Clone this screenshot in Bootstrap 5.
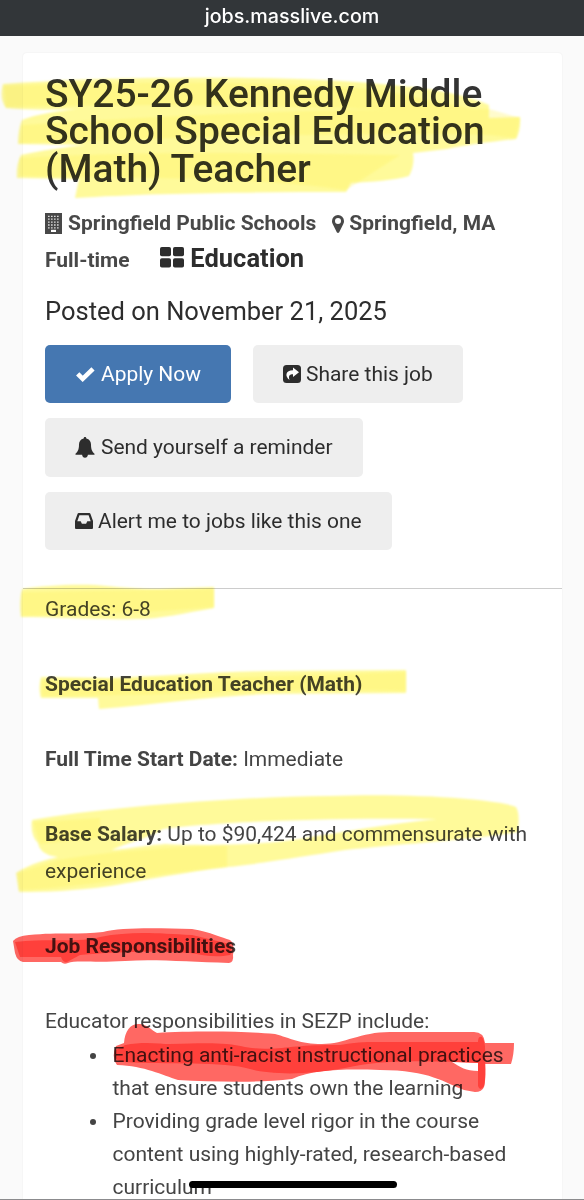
<!DOCTYPE html>
<html lang="en">
<head>
<meta charset="utf-8">
<meta name="viewport" content="width=device-width, initial-scale=1">
<title>SY25-26 Kennedy Middle School Special Education (Math) Teacher</title>
<link href="https://cdn.jsdelivr.net/npm/bootstrap@5.3.0/dist/css/bootstrap.min.css" rel="stylesheet">
<style>
body{font-family:Roboto,"Liberation Sans",sans-serif;font-size:20.98px;line-height:37.5px;color:#444;background:#fafafa}
.screen{height:1200px;border-bottom:1px solid #8b8b8d}
.urlbar{height:36px;background:#323639;color:#fff;font:500 19.7px/32px Inter,"Liberation Sans",sans-serif}
.job{margin:17px 22px 0 23px;background:#fff;border-radius:4px;box-shadow:0 0 2px rgba(0,0,0,.07)}
.job-head{padding:22.5px 22px 0;height:536px;border-bottom:1px solid #ccc}
.job-title{font-size:38.95px;line-height:37.5px;font-weight:500;color:#333;height:129.5px}
.meta{color:#484848;height:37px;white-space:nowrap}
.meta.second{margin-top:-2.5px}
.category{font-size:25.5px;color:#2d2d2d;margin-left:30.5px}
.category svg{position:relative;top:1px}
.posted{font-size:25.5px;color:#2d2d2d;margin-top:16.5px;margin-bottom:14px;height:37.5px}
.actions{gap:15px 22px}
.btn-job{height:58.5px;padding:0 30px;border:0;border-radius:5px;font-size:20.95px;line-height:58px;background:#eee;color:#2d2d2d;white-space:nowrap}
.btn-job.apply{background:#4577b1;color:#fff}
.job-body{padding:1.500px 22px 0}
.job-body p{margin-bottom:37.5px;white-space:nowrap}
.job-body ul{list-style:none;padding-left:67.5px;margin-top:-39.5px;line-height:33px}
.job-body li{position:relative;white-space:nowrap}
.job-body li::before{content:"";position:absolute;left:-23px;top:14px;width:6px;height:6px;border-radius:50%;background:#444}
.ink{left:0;top:0;mix-blend-mode:multiply;pointer-events:none}
.homebar{left:189px;top:1180.5px;width:207.5px;height:7px;background:#000}
svg{flex:none}
</style>
</head>
<body>
<div class="screen position-relative overflow-hidden">
  <header class="urlbar text-center">jobs.masslive.com</header>
  <main class="job">
    <section class="job-head">
      <h1 class="job-title mb-0">SY25-26 Kennedy Middle<br>School Special Education<br>(Math) Teacher</h1>
      <div class="meta d-flex align-items-center fw-bold">
        <svg width="17" height="21" viewBox="0 0 17 21"><path fill="#484848" d="M0 0h17v21H0z"/><path d="M3.2 3.3h11M3.2 6.2h11M3.2 9.1h11M3.2 12h11M3.2 14.9h11" stroke="#fff" stroke-width="1.3" stroke-dasharray="1.3 1.7"/><path fill="#fff" d="M6 16.8h5V19H6z"/></svg>
        <span style="margin-left:6px">Springfield Public Schools</span>
        <svg width="12" height="18" viewBox="0 0 12 18" style="margin-left:15.500px"><path fill="#484848" fill-rule="evenodd" d="M6 0a6 6 0 0 1 6 6c0 1.3-.3 2.1-.7 3L7.200 17.200q-1.200 1.500-2.400 0L.700 9C.3 8.100 0 7.300 0 6a6 6 0 0 1 6-6zm0 3a3 3 0 1 0 0 6 3 3 0 0 0 0-6z"/></svg>
        <span style="margin-left:5.500px">Springfield, MA</span>
      </div>
      <div class="meta second d-flex align-items-baseline fw-bold">
        <span>Full-time</span>
        <span class="category"><svg width="24" height="21" viewBox="0 0 24 21" class="align-baseline"><g fill="#2d2d2d"><rect width="11" height="9.300" rx="1.800"/><rect x="13" width="11" height="9.300" rx="1.800"/><rect y="11.300" width="11" height="9.300" rx="1.800"/><rect x="13" y="11.300" width="11" height="9.300" rx="1.800"/></g></svg> Education</span>
      </div>
      <div class="posted">Posted on November 21, 2025</div>
      <div class="actions d-flex flex-wrap">
        <a class="btn btn-job apply d-flex align-items-center" href="#"><svg width="20" height="16" viewBox="0 0 20 16"><path d="M2.700 7.800l5 5L18 2.800" fill="none" stroke="#fff" stroke-width="4.600"/></svg><span style="margin-left:6px">Apply Now</span></a>
        <a class="btn btn-job d-flex align-items-center" href="#"><svg width="18" height="18" viewBox="0 0 18 18"><rect width="18" height="18" rx="3.500" fill="#2d2d2d"/><path fill="#fff" d="M10 2.500l6 4.700-6 4.800V9.200c-3.500 0-4.700 1.500-3.500 5.800C1.500 11 2.500 5.300 10 5.200z"/></svg><span style="margin-left:5px">Share this job</span></a>
        <a class="btn btn-job d-flex align-items-center" href="#"><svg width="20" height="21" viewBox="0 0 20 21"><path fill="#2d2d2d" d="M10 0c.9 0 1.400.600 1.300 1.500C14.500 2.200 16 4.500 16 7.500c0 5 1.300 7.500 3.500 9.200v1.100h-6.600c-.2 1.800-1.300 2.900-2.900 2.900s-2.700-1.100-2.900-2.900H.5v-1.100C2.700 15 4 12.500 4 7.500c0-3 1.500-5.300 4.700-6C8.600.600 9.100 0 10 0z"/></svg><span style="margin-left:6px">Send yourself a reminder</span></a>
        <a class="btn btn-job d-flex align-items-center" href="#"><svg width="18" height="16" viewBox="0 0 18 16"><path fill="#2d2d2d" fill-rule="evenodd" d="M3.700 0h10.600q.8 0 1.100.8L18 8v7q0 1-1 1H1q-1 0-1-1V8L2.600.8Q2.900 0 3.700 0zm.7 2.300L2.300 8.200h3.400l1.200 2.500h4.200l1.200-2.500h3.400l-2.100-5.900z"/></svg><span style="margin-left:5px">Alert me to jobs like this one</span></a>
      </div>
    </section>
    <section class="job-body">
      <p>Grades: 6-8</p>
      <p><strong>Special Education Teacher (Math)</strong></p>
      <p><strong>Full Time Start Date:</strong> Immediate</p>
      <p><strong>Base Salary:</strong> Up to $90,424 and commensurate with<br>experience</p>
      <p><strong>Job Responsibilities</strong></p>
      <p>Educator responsibilities in SEZP include:</p>
      <ul class="mb-0">
        <li>Enacting anti-racist instructional practices<br>that ensure students own the learning</li>
        <li>Providing grade level rigor in the course<br>content using highly-rated, research-based<br>curriculum</li>
      </ul>
    </section>
  </main>

  <!-- marker strokes over the page -->
  <svg class="ink position-absolute" width="584" height="1200" viewBox="0 0 584 1200">
    <defs><filter id="soft" x="-5%" y="-20%" width="110%" height="140%"><feGaussianBlur stdDeviation=".9"/></filter><filter id="edge" x="-5%" y="-20%" width="110%" height="140%"><feGaussianBlur stdDeviation=".6"/></filter></defs>
    <g fill="#fffa9a" filter="url(#soft)">
      <path d="M3 84C60 80 110 78 170 78C260 77 330 79 380 84C430 88 460 93 489 105L489 118L520 117Q521 130 516 139C490 142 465 145 447 149L413 153Q415 165 409 176C395 180 370 182 351 183L346 192C260 192 150 193 75 198L79 179L17 178Q16 165 21 155C40 151 65 147 86 145L18 144Q18 130 22 120C36 114 60 111 76 109C50 110 25 110 6 108Q-1 98 3 84z"/>
      <path d="M22 589C40 586 70 584 95 585C120 587 135 589 160 589L214 587L214 608C185 613 160 619 138 619C90 620 60 617 21 617Q19 602 22 589z"/>
      <path d="M41 677L110 678C160 676 210 672 270 671L406 670L406 693L270 694C210 696 160 704 99 709L98 698L41 698Q38 688 41 677z"/>
      <path fill-rule="evenodd" d="M32 820C100 808 230 797 330 796C420 793 500 800 516 807Q520 814 518 829L518 832C470 840 390 845 345 850C280 860 250 865 227 867C200 870 150 879 110 886C75 891 45 892 19 892L16 873C30 864 45 860 58 857Q40 855 38 843Q30 835 32 820zM163 829C200 824 300 817 437 819C390 824 340 832 300 839C260 845 210 846 165 844C140 846 120 850 112 850C125 843 150 838 163 829z"/>
    </g>
    <g fill="#fff25a" opacity=".3" filter="url(#soft)">
      <path d="M4 86C150 80 300 82 380 90L489 112L489 116C400 108 200 102 6 107z"/>
      <path d="M22 125C150 117 320 107 489 109L520 118L516 138L489 135C300 132 130 140 20 143z"/>
      <path d="M20 158C150 150 300 154 400 155L346 190C240 175 120 179 20 176z"/>
      <path d="M22 592L214 589L214 607C150 613 80 615 22 616z"/>
      <path d="M42 680C160 680 280 676 406 672L406 691C280 688 160 696 42 696z"/>
      <path d="M33 822L100 818V838L40 844z"/>
      <path d="M58 860C120 850 170 847 227 846L227 867C160 873 80 888 19 890L18 873z"/>
    </g>
    <g fill="#ff6763" filter="url(#edge)">
      <path d="M13 941Q17 936 29 935C60 932 80 935 103 932C120 927 160 928 192 929C211 932 222 938 230 940Q235 943 233 955Q234 962 229 963C190 962 155 959 125 961C95 963 75 960 68 963Q64 965 61 962L23 962Q17 961 15 953z"/>
      <path fill-rule="evenodd" d="M124 1043C125 1030 131 1023 140 1024C148 1025 151 1030 157 1033C190 1031 245 1031 275 1034C290 1038 300 1044 322 1044C345 1044 360 1032 390 1032L474 1032Q484 1032 485 1043L514 1043Q514 1055 511 1064L485 1064Q486 1080 484 1087Q482 1092 475 1092L464 1090C445 1083 430 1070 380 1070C345 1069 315 1069 292 1079C260 1083 215 1082 178 1080C162 1075 145 1066 117 1065Q111 1057 116 1046zM452 1062C460 1067 466 1071 478 1071L478 1063z"/>
    </g>
    <g fill="#ff403a" filter="url(#edge)">
      <path d="M15 942C50 938 80 943 100 937C130 931 155 933 192 935L230 944C232 949 232 953 230 955C215 958 203 955 190 953C150 950 100 953 80 955L67 962Q63 963 61 957L20 957z"/>
      <path d="M125 1045C145 1041 160 1044 170 1044C205 1043 225 1042 245 1047C275 1052 290 1044 340 1045C360 1041 375 1042 395 1042L478 1042Q478 1036 482 1037Q486 1043 485 1055Q486 1078 484 1086Q480 1092 478 1086L478 1063C430 1060 375 1060 345 1068C310 1075 270 1075 250 1069C225 1061 165 1065 125 1062Q112 1062 116 1050z"/>
    </g>
  </svg>
  <div class="homebar position-absolute rounded-pill"></div>
</div>
<script src="https://cdn.jsdelivr.net/npm/bootstrap@5.3.0/dist/js/bootstrap.bundle.min.js"></script>
</body>
</html>
